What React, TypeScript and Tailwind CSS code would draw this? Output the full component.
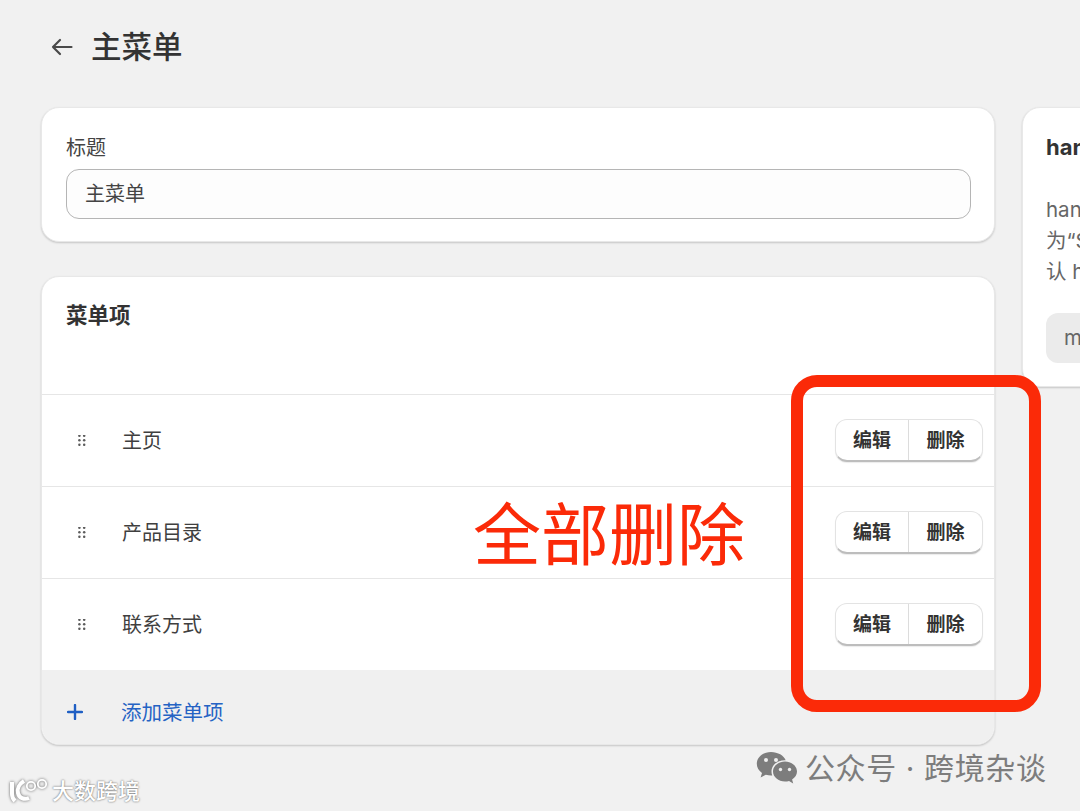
const cjk = "font-['Inter','Noto_Sans_CJK_SC',sans-serif]";

function Grip() {
  return (
    <svg width="8" height="11" viewBox="0 0 8 11" fill="#5c5c5c" className="shrink-0">
      {[1, 5.5, 10].map((y) => (
        <g key={y}>
          <circle cx="1.4" cy={y - 0.2} r="1.25" />
          <circle cx="6.2" cy={y - 0.2} r="1.25" />
        </g>
      ))}
    </svg>
  );
}

function Row({ label }: { label: string }) {
  return (
    <div className="h-[92px] flex items-center border-t border-[#e6e6e6] pl-[36px] pr-[11px]">
      <Grip />
      <div className="ml-[36px] text-[20px] text-[#3f3f3f] flex-1">{label}</div>
      <div className="flex h-[43px] rounded-[12px] bg-white border border-[#e3e3e3] border-b-[2px] border-b-[#bdbdbd] shadow-[0_1px_1px_rgba(0,0,0,0.08)] text-[19px] font-bold text-[#333]">
        <div className="w-[73px] pt-[3px] flex items-center justify-center border-r border-[#dcdcdc]">编辑</div>
        <div className="w-[73px] pt-[3px] flex items-center justify-center">删除</div>
      </div>
    </div>
  );
}

function Chat() {
  return (
    <svg width="42" height="34" viewBox="0 0 42 34" className="shrink-0">
      <path fill="#7d7d7d" d="M15 1C7 1 .8 6.2.8 12.8c0 3.8 2 7 5.2 9.2l-1.4 4.6 5.2-2.8c1.8.5 3.6.8 5.2.8h1.2c-.5-1.3-.7-2.6-.7-4 0-6.4 5.8-11.4 13.2-11.4h1C27.800 4.600 22 1 15 1z" />
      <path fill="#7d7d7d" d="M41 20.500C41 15 35.500 10.500 29 10.500S17 15 17 20.500 22.500 30.500 29 30.500c1.400 0 2.800-.2 4-.6l4.200 2.500-1.100-4C39.200 26.500 41 23.700 41 20.500z" />
      <circle cx="10" cy="9" r="2" fill="#efefef" />
      <circle cx="20" cy="9" r="2" fill="#efefef" />
      <circle cx="24.500" cy="18.500" r="1.700" fill="#efefef" />
      <circle cx="33.500" cy="18.500" r="1.700" fill="#efefef" />
    </svg>
  );
}

function Logo() {
  return (
    <svg width="40" height="26" viewBox="0 0 40 26" fill="none" stroke="#fff" className="shrink-0 drop-shadow-[0_0_1.5px_rgba(0,0,0,0.6)]">
      <path strokeWidth="4" d="M3 4v12c0 3 1 5 3 7" />
      <path strokeWidth="4" d="M15 3C10 6 8 11 9 15c1 5 6 7 11 5" />
      <circle strokeWidth="1.800" cx="22" cy="8" r="4.200" />
      <circle strokeWidth="1.800" cx="33" cy="6" r="4.200" />
    </svg>
  );
}

export default function App() {
  return (
    <div className={`relative w-[1080px] h-[811px] overflow-hidden bg-[#f1f1f1] ${cjk}`}>
      <div className="pl-[41px] pt-[27px]">
        <header className="h-[80px] flex items-start">
          <svg width="22" height="18" viewBox="0 0 22 18" fill="none" stroke="#4a4a4a" strokeWidth="2.200" strokeLinecap="round" strokeLinejoin="round" className="ml-[10px] mt-[11px]">
            <path d="M20.500 9H2M9 2 2 9l7 7" />
          </svg>
          <h1 className="ml-[18px] text-[30.500px] leading-[40px] font-medium text-[#333]">主菜单</h1>
        </header>

        <div className="flex items-start gap-[27px] w-[1200px]">
          <main className="w-[954px] shrink-0 flex flex-col gap-[34px]">
            <section className="h-[135px] rounded-[18px] bg-white border border-[#e8e8e8] shadow-[0_1px_2px_rgba(0,0,0,0.18)] px-[24px] pt-[26px]">
              <div className="text-[20px] leading-[28px] text-[#444]">标题</div>
              <div className="mt-[7px] h-[50px] w-[905px] flex items-center rounded-[13px] border border-[#b5b5b5] bg-[#fdfdfd] px-[18px] text-[20px] text-[#444]">主菜单</div>
            </section>

            <section className="h-[469px] rounded-[18px] bg-white border border-[#e8e8e8] shadow-[0_1px_2px_rgba(0,0,0,0.18)] overflow-hidden">
              <div className="h-[117px] px-[24px] pt-[23px] text-[21.500px] leading-[30px] font-semibold text-[#333]">菜单项</div>
              <Row label="主页" />
              <Row label="产品目录" />
              <Row label="联系方式" />
              <div className="h-[75px] flex items-center bg-[#f0f0f0] pl-[25px] pt-[8px] text-[20.500px] text-[#2563c4]">
                <svg width="16" height="16" viewBox="0 0 16 16" stroke="#1f5fc4" strokeWidth="2.400" strokeLinecap="round">
                  <path d="M8 1v14M1 8h14" />
                </svg>
                <span className="ml-[38px] relative top-[2px]">添加菜单项</span>
              </div>
            </section>
          </main>

          <aside className="w-[300px] h-[280px] shrink-0 rounded-[18px] bg-white border border-[#e8e8e8] shadow-[0_1px_2px_rgba(0,0,0,0.18)] pl-[23px] pt-[24px]">
            <div className="text-[22px] leading-[30px] font-bold text-[#333]">handle</div>
            <div className="mt-[32px] text-[20.500px] leading-[31px] text-[#666] whitespace-nowrap">
              <div>handle 用于在主题中引用</div>
              <div>为“Sidebar menu”的菜单</div>
              <div>认 handle 为 sidebar-menu</div>
            </div>
            <div className="mt-[26px] h-[50px] w-[240px] flex items-center rounded-[12px] bg-[#ebebeb] px-[18px] text-[20.500px] text-[#666]">main-menu</div>
          </aside>
        </div>
      </div>

      {/* annotation layer over the screenshot */}
      <div className="absolute left-[791px] top-[375px] w-[250px] h-[337px] rounded-[26px] border-[12px] border-[#fb2a08]" />
      <div className="absolute left-[473px] top-[487px] text-[68px] leading-[96px] text-[#fb2a08] whitespace-nowrap">全部删除</div>
      <div className="absolute left-[756px] top-[750px] flex items-center text-[30px] leading-[36px] text-[#7d7d7d] whitespace-nowrap tracking-[0.6px]">
        <Chat />
        <span className="ml-[7px]">公众号 · 跨境杂谈</span>
      </div>
      <div className="absolute left-[9px] top-[776px] flex items-center text-[22px] leading-[30px] font-medium text-white whitespace-nowrap [text-shadow:0_0_2px_rgba(0,0,0,0.7)]">
        <Logo />
        <span className="ml-[3px]">大数跨境</span>
      </div>
    </div>
  );
}
